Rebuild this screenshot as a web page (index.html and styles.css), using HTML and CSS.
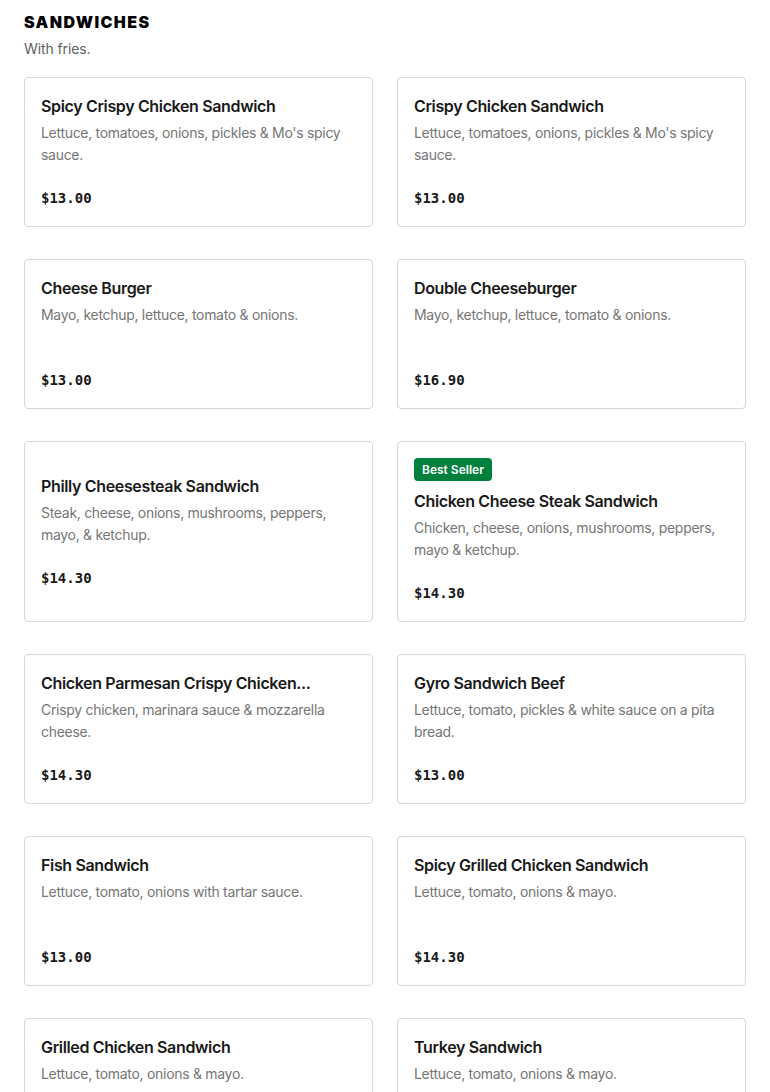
FILE: index.html
```html
<!DOCTYPE html>
<html lang="en">
<head>
<meta charset="utf-8">
<title>Sandwiches</title>
<link rel="stylesheet" href="styles.css">
</head>
<body>
<section class="menu">
  <h2 class="menu-title">SANDWICHES</h2>
  <p class="menu-sub">With fries.</p>
  <div class="grid">
    <article class="card">
      <h3 class="name">Spicy Crispy Chicken Sandwich</h3>
      <p class="desc">Lettuce, tomatoes, onions, pickles &amp; Mo's spicy sauce.</p>
      <p class="price">$13.00</p>
    </article>
    <article class="card">
      <h3 class="name">Crispy Chicken Sandwich</h3>
      <p class="desc">Lettuce, tomatoes, onions, pickles &amp; Mo's spicy sauce.</p>
      <p class="price">$13.00</p>
    </article>
    <article class="card">
      <h3 class="name">Cheese Burger</h3>
      <p class="desc">Mayo, ketchup, lettuce, tomato &amp; onions.</p>
      <p class="price">$13.00</p>
    </article>
    <article class="card">
      <h3 class="name">Double Cheeseburger</h3>
      <p class="desc">Mayo, ketchup, lettuce, tomato &amp; onions.</p>
      <p class="price">$16.90</p>
    </article>
    <article class="card">
      <h3 class="name">Philly Cheesesteak Sandwich</h3>
      <p class="desc">Steak, cheese, onions, mushrooms, peppers, mayo, &amp; ketchup.</p>
      <p class="price">$14.30</p>
    </article>
    <article class="card">
      <span class="badge">Best Seller</span>
      <h3 class="name">Chicken Cheese Steak Sandwich</h3>
      <p class="desc">Chicken, cheese, onions, mushrooms, peppers, mayo &amp; ketchup.</p>
      <p class="price">$14.30</p>
    </article>
    <article class="card">
      <h3 class="name">Chicken Parmesan Crispy Chicken...</h3>
      <p class="desc">Crispy chicken, marinara sauce &amp; mozzarella cheese.</p>
      <p class="price">$14.30</p>
    </article>
    <article class="card">
      <h3 class="name">Gyro Sandwich Beef</h3>
      <p class="desc">Lettuce, tomato, pickles &amp; white sauce on a pita bread.</p>
      <p class="price">$13.00</p>
    </article>
    <article class="card">
      <h3 class="name">Fish Sandwich</h3>
      <p class="desc">Lettuce, tomato, onions with tartar sauce.</p>
      <p class="price">$13.00</p>
    </article>
    <article class="card">
      <h3 class="name">Spicy Grilled Chicken Sandwich</h3>
      <p class="desc">Lettuce, tomato, onions &amp; mayo.</p>
      <p class="price">$14.30</p>
    </article>
    <article class="card">
      <h3 class="name">Grilled Chicken Sandwich</h3>
      <p class="desc">Lettuce, tomato, onions &amp; mayo.</p>
      <p class="price">$13.00</p>
    </article>
    <article class="card">
      <h3 class="name">Turkey Sandwich</h3>
      <p class="desc">Lettuce, tomato, onions &amp; mayo.</p>
      <p class="price">$13.00</p>
    </article>
  </div>
</section>
</body>
</html>
```

FILE: styles.css
```css
* { box-sizing: border-box; }
html, body { margin: 0; padding: 0; background: #fff; }
body {
  font-family: Inter, "Noto Sans", "Liberation Sans", sans-serif;
  color: #191919;
}
.menu {
  padding: 10px 24px 40px;
}
.menu-title {
  margin: 0;
  font-size: 16px;
  line-height: 24px;
  font-weight: 900;
  letter-spacing: 1.4px;
  color: #000;
}
.menu-sub {
  margin: 4px 0 0;
  font-size: 14px;
  line-height: 22px;
  color: #606060;
  letter-spacing: -0.1px;
}
.grid {
  margin-top: 17px;
  display: grid;
  grid-template-columns: 1fr 1fr;
  column-gap: 24px;
  row-gap: 32px;
}
.card {
  border: 1px solid #d6d6d6;
  border-radius: 4px;
  padding: 16px;
  display: flex;
  flex-direction: column;
  justify-content: center;
  align-items: flex-start;
  min-height: 150px;
}
.badge {
  display: inline-block;
  height: 23px;
  line-height: 23px;
  padding: 0 8px;
  background: #00803c;
  color: #fff;
  font-size: 12px;
  font-weight: 600;
  border-radius: 4px;
  margin-bottom: 8px;
}
.name {
  margin: 0;
  font-size: 16px;
  line-height: 24px;
  font-weight: 600;
  letter-spacing: -0.35px;
  color: #191919;
}
.desc {
  margin: 4px 0 0;
  font-size: 14px;
  line-height: 22px;
  min-height: 44px;
  letter-spacing: -0.3px;
  color: #767676;
}
.price {
  margin: 20px 0 0;
  font-family: "DejaVu Sans Mono", "Liberation Mono", monospace;
  font-weight: 700;
  font-size: 14px;
  line-height: 24px;
  color: #191919;
}
```
